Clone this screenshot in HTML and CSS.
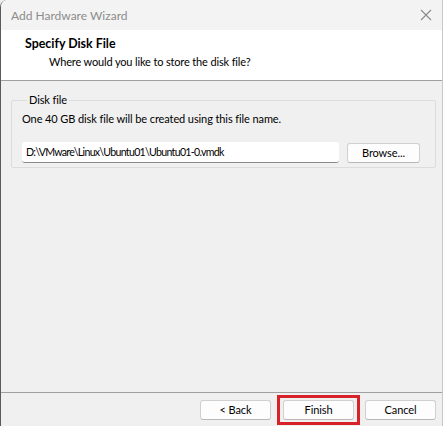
FILE: index.html
```html
<!DOCTYPE html>
<html>
<head>
<meta charset="utf-8">
<link rel="stylesheet" href="styles.css">
</head>
<body>
<div class="window">
  <div class="titlebar">
    <span class="title">Add Hardware Wizard</span>
    <svg class="close" width="12" height="12" viewBox="0 0 12 12"><path d="M1 1 L11 11 M11 1 L1 11" stroke="#8a8a8a" stroke-width="1.1" fill="none"/></svg>
  </div>
  <div class="header">
    <div class="h-title">Specify Disk File</div>
    <div class="h-sub">Where would you like to store the disk file?</div>
  </div>
  <div class="body">
    <fieldset class="group">
      <legend>Disk file</legend>
      <div class="desc">One 40 GB disk file will be created using this file name.</div>
      <div class="row">
        <div class="input">D:\VMware\Linux\Ubuntu01\Ubuntu01-0.vmdk</div>
        <div class="btn browse">Browse...</div>
      </div>
    </fieldset>
  </div>
  <div class="footer">
    <div class="btn">&lt; Back</div>
    <div class="highlight"><div class="btn">Finish</div></div>
    <div class="btn">Cancel</div>
  </div>
</div>
<div class="edge"></div>
</body>
</html>
```
FILE: styles.css
```css
html, body {
  margin: 0;
  padding: 0;
  background: #f0f0f0;
}
body {
  width: 445px;
  height: 426px;
  overflow: hidden;
  display: flex;
  font-family: Lato, "Open Sans", sans-serif;
  font-size: 11px;
  letter-spacing: -0.1px;
  color: #000;
}
.window {
  width: 441px;
  height: 426px;
  border-left: 1px solid #5a5a5a;
  border-right: 1px solid #c8c8c8;
  border-top-left-radius: 7px;
  background: #f0f0f0;
  display: flex;
  flex-direction: column;
  overflow: hidden;
}
.edge {
  flex: 1;
  background: #ffffff;
}
.titlebar {
  height: 30px;
  flex: none;
  background: #f3f3f3;
  display: flex;
  align-items: center;
  justify-content: space-between;
  padding: 0 9px 0 10px;
}
.title {
  color: #8c8c8c;
  font-size: 12px;
  letter-spacing: 0;
}
.close {
  margin-right: 1px;
}
.header {
  height: 51px;
  flex: none;
  background: #ffffff;
  border-bottom: 1px solid #a0a0a0;
  box-sizing: border-box;
  padding: 5px 0 0 24px;
}
.h-title {
  font-weight: 700;
  font-size: 12.4px;
  letter-spacing: 0;
  line-height: 17px;
}
.h-sub {
  padding-left: 24px;
  line-height: 19px;
  letter-spacing: -0.15px;
}
.body {
  flex: 1;
  padding: 11px 6px 0 10px;
}
.group {
  margin: 0;
  border: 1px solid #dcdcdc;
  border-radius: 2px;
  padding: 3px 10px 11px 10px;
  height: 76px;
  box-sizing: border-box;
}
.group legend {
  padding: 0 2px;
  margin-left: 5px;
  line-height: 16px;
}
.desc {
  line-height: 16px;
}
.row {
  display: flex;
  align-items: center;
  gap: 8px;
  margin-top: 15px;
}
.input {
  width: 317px;
  height: 21px;
  box-sizing: border-box;
  background: #fff;
  border-bottom: 1px solid #8a8a8a;
  border-radius: 3px;
  padding-left: 4px;
  line-height: 20px;
  font-size: 10.6px;
  letter-spacing: -0.7px;
}
.btn {
  width: 71px;
  height: 20px;
  box-sizing: border-box;
  background: #fdfdfd;
  border: 1px solid #d0d0d0;
  border-bottom-color: #b8b8b8;
  border-radius: 3px;
  display: flex;
  align-items: center;
  justify-content: center;
}
.browse {
  width: 73px;
}
.footer {
  height: 33px;
  flex: none;
  border-top: 1px solid #a0a0a0;
  display: flex;
  align-items: center;
  justify-content: flex-end;
  padding-right: 6px;
  gap: 0;
}
.footer > .btn:first-child {
  margin-right: 6px;
}
.highlight {
  border: 3px solid #d7222a;
  padding: 2px 3px;
  margin-right: 5px;
}
```
